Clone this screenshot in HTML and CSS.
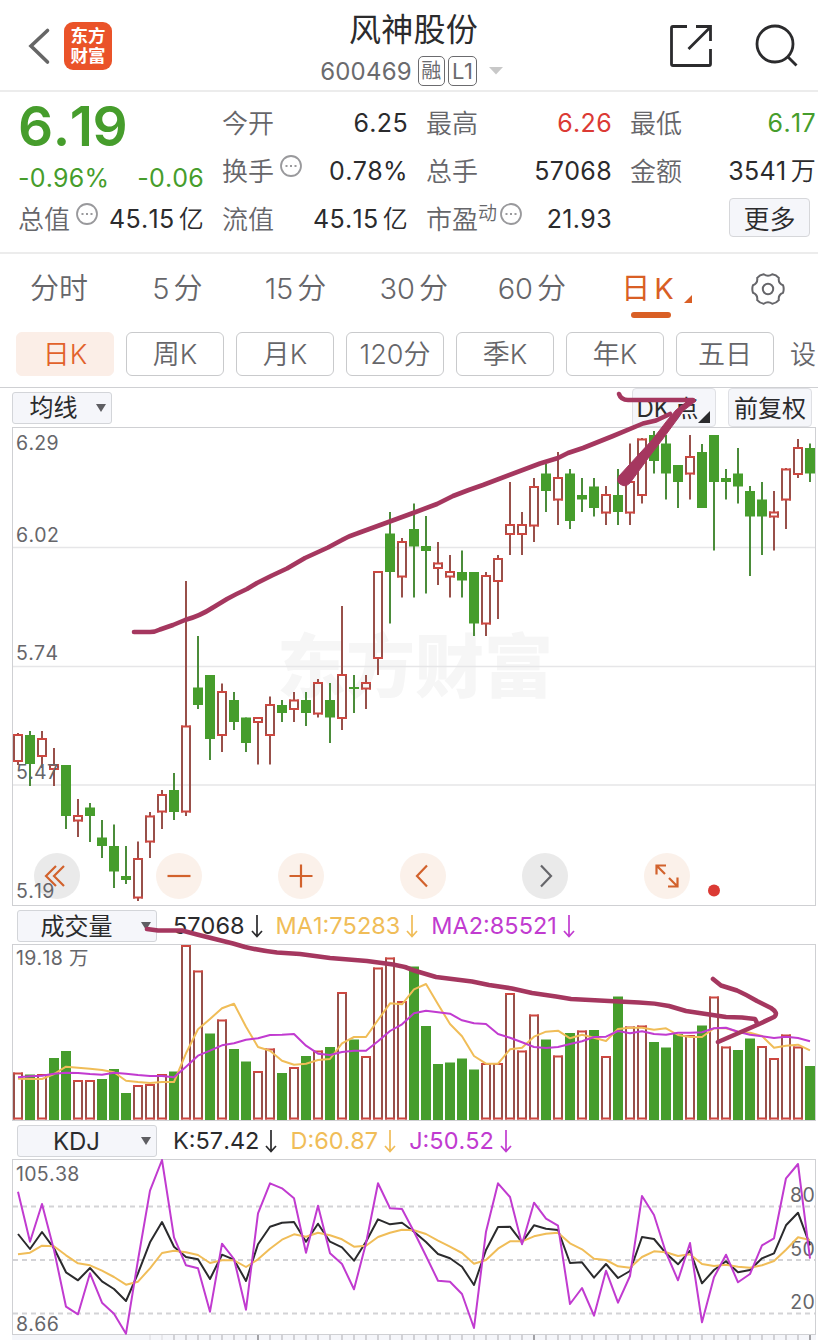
FILE: index.html
```html
<!DOCTYPE html>
<html lang="zh-CN">
<head>
    <meta charset="UTF-8">
    <meta name="viewport" content="width=device-width, initial-scale=1.0">
    <title>风神股份 600469</title>
    <link rel="stylesheet" href="styles.css">
</head>
<body>
    <div class="app">
        <header class="header">
            <div class="header-left">
                <svg class="back" width="24" height="40" viewBox="0 0 24 40"><path d="M20.5 4.5 4 20 20.5 36"/></svg>
                <div class="logo"><span>东方</span><span>财富</span></div>
            </div>
            <div class="header-title">
                <h1>风神股份</h1>
                <div class="code-row">
                    <span class="code">600469</span>
                    <span class="badge">融</span>
                    <span class="badge badge-l1">L1</span>
                    <svg class="caret" width="14" height="8" viewBox="0 0 14 8"><path d="M0 0H14L7 7.500Z"/></svg>
                </div>
            </div>
            <div class="header-right">
                <svg width="44" height="44" viewBox="0 0 44 44"><path d="M18 2.500H4Q2.500 2.500 2.500 4V40Q2.500 41.500 4 41.500H40Q41.500 41.500 41.500 40V25M27 2.500H41.500V17M19.500 25 41 3.500"/></svg>
                <svg width="44" height="44" viewBox="0 0 44 44"><circle cx="20" cy="20" r="18"/><path d="M33 33 41.500 41.500"/></svg>
            </div>
        </header>

        <section class="quote">
            <div class="quote-col quote-main">
                <div class="price">6.19</div>
                <div class="change"><span>-0.96%</span><span>-0.06</span></div>
                <div class="cell">
                    <span class="label">总值</span>
                    <svg class="more-dot" width="22" height="22" viewBox="0 0 22 22"><circle cx="11" cy="11" r="10"/><path d="M5.500 11h2M10 11h2M14.500 11h2"/></svg>
                    <span class="value">45.15<i>亿</i></span>
                </div>
            </div>
            <div class="quote-col">
                <div class="cell"><span class="label">今开</span><span class="value">6.25</span></div>
                <div class="cell">
                    <span class="label">换手</span>
                    <svg class="more-dot" width="22" height="22" viewBox="0 0 22 22"><circle cx="11" cy="11" r="10"/><path d="M5.500 11h2M10 11h2M14.500 11h2"/></svg>
                    <span class="value">0.78%</span>
                </div>
                <div class="cell"><span class="label">流值</span><span class="value">45.15<i>亿</i></span></div>
            </div>
            <div class="quote-col">
                <div class="cell"><span class="label">最高</span><span class="value up">6.26</span></div>
                <div class="cell"><span class="label">总手</span><span class="value">57068</span></div>
                <div class="cell">
                    <span class="label">市盈<sup>动</sup></span>
                    <svg class="more-dot tight" width="22" height="22" viewBox="0 0 22 22"><circle cx="11" cy="11" r="10"/><path d="M5.500 11h2M10 11h2M14.500 11h2"/></svg>
                    <span class="value">21.93</span>
                </div>
            </div>
            <div class="quote-col">
                <div class="cell"><span class="label">最低</span><span class="value down">6.17</span></div>
                <div class="cell"><span class="label">金额</span><span class="value">3541<i>万</i></span></div>
                <div class="cell cell-more"><button class="more-btn">更多</button></div>
            </div>
        </section>

        <nav class="tabs">
            <span class="tab">分时</span>
            <span class="tab">5<i>分</i></span>
            <span class="tab">15<i>分</i></span>
            <span class="tab">30<i>分</i></span>
            <span class="tab">60<i>分</i></span>
            <span class="tab active">日<i>K</i></span>
            <span class="tab">
                <svg class="gear" width="36" height="36" viewBox="-18 -18 36 36"><path d="M15-3.800Q16.400 0 15 3.800Q10 5.800 10.800 11.200Q8.200 14.300 4.300 14.800Q0 11.600-4.300 14.800Q-8.200 14.300-10.800 11.200Q-10 5.800-15 3.800Q-16.400 0-15-3.800Q-10-5.800-10.800-11.200Q-8.200-14.300-4.300-14.800Q0-11.600 4.300-14.800Q8.200-14.300 10.800-11.200Q10-5.800 15-3.800Z"/><circle r="5.200"/></svg>
            </span>
        </nav>

        <div class="periods">
            <span class="period selected">日K</span>
            <span class="period">周K</span>
            <span class="period">月K</span>
            <span class="period">120分</span>
            <span class="period">季K</span>
            <span class="period">年K</span>
            <span class="period">五日</span>
            <span class="period-set">设</span>
        </div>

        <div class="toolbar">
            <div class="select select-ma"><span>均线</span><b class="arrow"></b></div>
            <div class="toolbar-right">
                <div class="tool dk">DK 点</div>
                <div class="tool">前复权</div>
            </div>
        </div>

        <div class="chart-box">
            <div class="watermark">东方财富</div>
            <svg id="kline" class="chart" width="804" height="479" viewBox="12 427 804 479"></svg>
            <div class="controls">
                <span class="ctl off"><svg viewBox="-23 -23 46 46"><path d="M-1-10-11 0-1 10M7-10-3 0 7 10"/></svg></span>
                <span class="ctl"><svg viewBox="-23 -23 46 46"><path d="M-11.500 0h23"/></svg></span>
                <span class="ctl"><svg viewBox="-23 -23 46 46"><path d="M-11.500 0h23M0-11.500v23"/></svg></span>
                <span class="ctl"><svg viewBox="-23 -23 46 46"><path d="M4-10.500-6 0 4 10.500"/></svg></span>
                <span class="ctl off next"><svg viewBox="-23 -23 46 46"><path d="M-4-10.500 6 0-4 10.500"/></svg></span>
                <span class="ctl"><svg viewBox="-23 -23 46 46"><path d="M-10.500-1.500V-10.500H-1M-10-10-2-2M10.500 1.500V10.500H1M10 10 2 2"/></svg></span>
            </div>
            <svg id="klabels" class="chart-labels" width="804" height="479" viewBox="12 427 804 479"></svg>
        </div>

        <div class="indicator">
            <div class="select"><span>成交量</span><b class="arrow"></b></div>
            <span class="ind dark">57068<svg class="fall" viewBox="0 0 12 24"><path d="M6 1V22M1 17 6 22.500 11 17"/></svg></span>
            <span class="ind yellow">MA1:75283<svg class="fall" viewBox="0 0 12 24"><path d="M6 1V22M1 17 6 22.500 11 17"/></svg></span>
            <span class="ind purple">MA2:85521<svg class="fall" viewBox="0 0 12 24"><path d="M6 1V22M1 17 6 22.500 11 17"/></svg></span>
        </div>
        <svg id="volume" class="chart" width="804" height="177" viewBox="12 944 804 177"></svg>

        <div class="indicator">
            <div class="select"><span>KDJ</span><b class="arrow"></b></div>
            <span class="ind dark">K:57.42<svg class="fall" viewBox="0 0 12 24"><path d="M6 1V22M1 17 6 22.500 11 17"/></svg></span>
            <span class="ind yellow">D:60.87<svg class="fall" viewBox="0 0 12 24"><path d="M6 1V22M1 17 6 22.500 11 17"/></svg></span>
            <span class="ind purple">J:50.52<svg class="fall" viewBox="0 0 12 24"><path d="M6 1V22M1 17 6 22.500 11 17"/></svg></span>
        </div>
        <svg id="kdj" class="chart" width="804" height="181" viewBox="12 1159 804 181"></svg>

        <!-- hand drawn trend arrows -->
        <svg class="marks" width="818" height="1340" viewBox="0 0 818 1340">
            <path d="M134 632H150Q155 632 160 629.500L173 625 185 620Q200 616 213 607.500L227 599Q236 594 247 589L257 583 272 575.500 287 568.500 305 558 328 547.500 342 540Q349 536 357 533.500L383 524 413 513 437 504 453 496Q468 490 483 485L540 463.500 558 458 568 453 583 448 613 436 643 423.500 656 420.500 670 414"/>
            <path d="M619 394Q621 400 628 400H693"/>
            <path class="solid" d="M691 399 696 401 683 411 676 421 662 440 652 453 630 483Q625 488 620 484 616 481 619 476L640 453 652 440 667.500 420 676 410Z"/>
            <path d="M147 929 158 930.500H182L197 934.500 233 943.500 245 947Q262 951 277 952.500L300 954 330 958 367 961 393 964.500Q404 966 414 970.500L436 977 472 981.500 489 985 512 988.500 532 993 556 996.500 571 999 609 1001 639 1002.500Q655 1003 669 1006L686 1011 726 1017 742 1017.500 755 1019 757 1023"/>
            <path d="M713 979 721 985.500 737 990.500Q747 995 757 1001L771 1008Q779 1013 774 1017L757 1025 718 1042"/>
        </svg>
    </div>

    <script src="charts.js"></script>
</body>
</html>
```

FILE: styles.css
```css
* {
    margin: 0;
    padding: 0;
    box-sizing: border-box;
}

body {
    background: #fff;
    color: #2b2b2d;
    font-family: Inter, "Noto Sans CJK SC", sans-serif;
    font-kerning: none;
    overflow: hidden;
}

i {
    font-style: normal;
}

svg {
    display: block;
    fill: none;
    flex-shrink: 0;
}

.app {
    position: relative;
    width: 818px;
    height: 1340px;
    overflow: hidden;
}

/* header */
.header {
    height: 92px;
    display: flex;
    justify-content: space-between;
    border-bottom: 2px solid #ececec;
}

.header-left {
    width: 200px;
    display: flex;
    align-items: center;
    padding: 2px 0 0 27px;
    gap: 13px;
}

.back {
    stroke: #666;
    stroke-width: 3.6;
    stroke-linecap: round;
}

.logo {
    width: 48px;
    height: 48px;
    border-radius: 9px;
    background: #ea5329;
    color: #fff;
    font-size: 17.5px;
    font-weight: 700;
    line-height: 20px;
    display: flex;
    flex-direction: column;
    align-items: center;
    justify-content: center;
}

.header-title {
    display: flex;
    flex-direction: column;
    align-items: center;
    padding-left: 9px;
}

.header-title h1 {
    margin-top: 10px;
    font-size: 32px;
    font-weight: 400;
    line-height: 40px;
    letter-spacing: 0.3px;
}

.code-row {
    display: flex;
    align-items: center;
    margin: 6px 4px 0 0;
    height: 30px;
    font-size: 24px;
    color: #6b6b6e;
}

.code {
    letter-spacing: 0.2px;
    margin-right: 6px;
}

.badge {
    width: 27px;
    height: 30px;
    border: 1.5px solid #6b6b6e;
    border-radius: 5px;
    font-size: 20px;
    line-height: 28px;
    text-align: center;
}

.badge-l1 {
    width: 29px;
    margin-left: 3px;
    font-size: 22px;
    letter-spacing: -0.5px;
}

.caret {
    margin-left: 12px;
    fill: #c8c8c8;
}

.header-right {
    width: 200px;
    display: flex;
    justify-content: flex-end;
    align-items: center;
    gap: 42px;
    padding: 2px 19px 0 0;
    stroke: #2b2b2d;
    stroke-width: 2.8;
}

/* quote */
.quote {
    height: 162px;
    display: flex;
    gap: 18px;
    padding: 7px 2px 0 18px;
    border-bottom: 2px solid #ececec;
}

.quote-col {
    width: 186px;
    flex-shrink: 0;
}

.price {
    height: 56px;
    font-size: 55px;
    font-weight: 600;
    line-height: 55px;
    letter-spacing: -0.5px;
    color: #469d2c;
}

.change {
    height: 40px;
    display: flex;
    justify-content: space-between;
    font-size: 25px;
    line-height: 46px;
    letter-spacing: 0.2px;
    color: #469d2c;
}

.cell {
    height: 48px;
    display: flex;
    align-items: center;
    line-height: 49px;
}

.label {
    font-size: 26px;
    font-weight: 350;
    color: #66666a;
}

.label sup {
    font-size: 19px;
    line-height: 1;
    vertical-align: 9px;
}

.more-dot {
    margin: -10px 0 0 6px;
    stroke: #99999c;
    stroke-width: 1.8;
}

.more-dot.tight {
    margin-left: 3px;
}

.value {
    margin-left: auto;
    font-size: 25px;
    letter-spacing: 0.35px;
    white-space: nowrap;
}

.value i {
    margin-left: 4px;
    font-weight: 350;
}

.up {
    color: #db3a34;
}

.down {
    color: #469d2c;
}

.cell-more {
    justify-content: flex-end;
    padding: 0 6px 4px 0;
}

.more-btn {
    width: 81px;
    height: 39px;
    border: 1px solid #d6d7da;
    border-radius: 4px;
    background: #f5f6fa;
    color: #2b2b2d;
    font: 350 26px/35px "Noto Sans CJK SC", sans-serif;
}

/* tabs */
.tabs {
    height: 78px;
    display: flex;
}

.tab {
    position: relative;
    width: 118.2px;
    flex-shrink: 0;
    height: 69px;
    display: flex;
    justify-content: center;
    align-items: center;
    font-size: 29px;
    font-weight: 350;
    line-height: 69px;
    color: #66666a;
}

.tab i {
    margin-left: 4px;
}

.tab.active {
    padding-right: 5px;
    color: #d95f25;
    font-weight: 400;
}

.tab.active::before {
    content: "";
    position: absolute;
    left: 40px;
    bottom: 5px;
    width: 40px;
    height: 6px;
    border-radius: 3px;
    background: #d95f25;
}

.tab.active::after {
    content: "";
    position: absolute;
    right: 17px;
    top: 41px;
    border-left: 8px solid transparent;
    border-bottom: 8px solid #d95f25;
}

.gear {
    stroke: #66666a;
    stroke-width: 2;
}

/* periods */
.periods {
    height: 55px;
    display: flex;
    gap: 12px;
    padding-left: 16px;
}

.period {
    width: 98px;
    height: 44px;
    flex-shrink: 0;
    border: 1px solid #c9cacc;
    border-radius: 6px;
    font-size: 27px;
    font-weight: 350;
    line-height: 43px;
    text-align: center;
    color: #66666a;
}

.period.selected {
    border-color: #fbeee7;
    background: #fbeee7;
    color: #e2622b;
}

.period-set {
    flex-shrink: 0;
    margin-left: 4px;
    font-size: 26px;
    font-weight: 350;
    line-height: 45px;
    color: #66666a;
}

/* toolbar */
.toolbar {
    height: 40px;
    display: flex;
    justify-content: space-between;
    align-items: center;
    padding: 0 6px 0 12px;
    border-top: 1px solid #cfd0d3;
}

.select {
    width: 140px;
    height: 32px;
    display: flex;
    align-items: center;
    border: 1px solid #d3d5d9;
    border-radius: 3px;
    background: #f5f6fa;
    font-size: 24px;
    line-height: 33px;
}

.select span {
    flex: 1;
    text-align: center;
}

.arrow {
    margin-right: 5px;
    border: 5px solid transparent;
    border-top: 8px solid #5e5e62;
    border-bottom: 0;
}

.select-ma {
    width: 100px;
}

.select-ma span {
    padding-right: 2px;
}

.toolbar-right {
    display: flex;
    gap: 12px;
}

.tool {
    position: relative;
    width: 84px;
    height: 39px;
    border: 1px solid #dfe0e4;
    border-radius: 4px;
    background: #f5f6fa;
    font-size: 24px;
    line-height: 40px;
    text-align: center;
    white-space: nowrap;
}

.dk {
    padding-right: 13px;
    word-spacing: -2px;
}

.dk::after {
    content: "";
    position: absolute;
    right: 5px;
    bottom: 3px;
    border-left: 12px solid transparent;
    border-bottom: 12px solid #2b2b2d;
}

/* charts */
.chart {
    position: relative;
    margin-left: 12px;
}

.chart-box {
    position: relative;
    height: 479px;
}

.watermark {
    position: absolute;
    left: 277px;
    top: 190px;
    font-size: 69px;
    font-weight: 900;
    line-height: 100px;
    color: #f6f6f6;
}

.chart-labels {
    position: absolute;
    left: 12px;
    top: 0;
}

.controls {
    position: absolute;
    left: 34px;
    bottom: 7px;
    display: flex;
    gap: 76px;
}

.ctl {
    width: 46px;
    height: 46px;
    border-radius: 50%;
    background: #fbf1ea;
    stroke: #d2622c;
    stroke-width: 2.2;
}

.ctl.off {
    background: #eaeaea;
}

.ctl.next {
    stroke: #66666a;
}

.indicator {
    height: 38px;
    display: flex;
    align-items: center;
    padding: 2px 0 0 17px;
}

.indicator .select {
    margin-right: 16px;
}

.indicator .select span {
    padding-right: 6px;
}

.ind {
    display: flex;
    align-items: center;
    gap: 6px;
    margin-right: 13px;
    font-size: 23.5px;
    line-height: 30px;
}

.fall {
    width: 12px;
    height: 24px;
    stroke: currentColor;
    stroke-width: 1.7;
}

.dark {
    color: #2b2b2d;
}

.yellow {
    color: #f0bd58;
}

.purple {
    color: #c13bd0;
}

.frame {
    stroke: #cfd0d3;
}

.grid {
    stroke: #e6e6e8;
    stroke-width: 1.4;
}

.dash {
    stroke: #d3d3d6;
    stroke-width: 2;
    stroke-dasharray: 5 4;
}

.axis {
    fill: #66666a;
    font-size: 19.5px;
    letter-spacing: 0.3px;
}

.red-h {
    stroke: #cd4740;
    stroke-width: 2;
}

.red-v {
    stroke: #98504a;
    stroke-width: 2;
}

.green-v {
    stroke: #4b8c3a;
    stroke-width: 2;
}

.green-body {
    fill: #469d2c;
}

.line {
    stroke-width: 2;
    stroke-linejoin: round;
}

.line-k {
    stroke: #2b2b2d;
}

.line-d {
    stroke: #f0bd58;
}

.line-j {
    stroke: #c13bd0;
}

.marks {
    position: absolute;
    left: 0;
    top: 0;
    stroke: #a5375f;
    stroke-width: 4.6;
    stroke-linecap: round;
    stroke-linejoin: round;
    pointer-events: none;
}

.marks .solid {
    fill: #a5375f;
    stroke-width: 1;
}
```

FILE: charts.js
```js
const STEP = 12;
const X0 = 18;

// kind, high, body top, body bottom, low
const candles = [
    ['r', 733, 734, 762, 765], ['g', 731, 735, 764, 786], ['r', 731, 738, 757, 768], ['r', 748, 764, 770, 786],
    ['g', 765, 765, 816, 829], ['r', 799, 815, 821.5, 837], ['g', 803, 807.5, 816, 842], ['g', 820, 837.5, 846, 858],
    ['g', 824.5, 846, 871.5, 888], ['g', 846, 876, 880, 884], ['r', 841.5, 858, 898.5, 901], ['r', 812, 815.5, 842.5, 858],
    ['r', 790, 794, 812.5, 829], ['g', 773, 790, 812, 820], ['r', 581, 725.5, 812.5, 816], ['g', 636, 687.5, 705, 709],
    ['g', 675, 675, 739, 760], ['r', 683.5, 691, 736, 752], ['g', 692, 700, 722, 730], ['g', 717.5, 717.5, 743, 752],
    ['r', 717, 717, 723, 764.5], ['r', 696.5, 704, 736, 764.5], ['g', 700, 705, 713, 722], ['r', 692, 699.5, 710, 722],
    ['g', 692, 700, 713, 726], ['r', 679, 682, 714.5, 717.5], ['g', 683, 700, 717.5, 743], ['r', 606, 674, 719, 730],
    ['g', 675, 687, 689, 713], ['r', 675, 682, 689.5, 709], ['r', 571, 571, 659, 675], ['g', 512, 533.5, 572, 623.5],
    ['r', 538, 541, 577.5, 597.5], ['g', 503.5, 529, 546.5, 597.5], ['g', 516, 546, 551, 593.5], ['r', 542, 562.5, 569, 585],
    ['r', 555, 571, 577.5, 597.5], ['g', 550.5, 572, 580.5, 597.5], ['g', 572, 572, 623.5, 636], ['r', 572, 575, 624.5, 636],
    ['r', 555, 558, 582, 619], ['r', 482, 524, 535, 555], ['r', 512, 524, 535, 555], ['r', 478, 486, 526.5, 542],
    ['g', 464, 473.5, 491, 512], ['r', 452, 477, 500.5, 525], ['g', 469, 473.5, 521, 529], ['g', 478, 495, 499.5, 512],
    ['g', 478, 486.5, 508, 516.5], ['r', 486, 494, 513.5, 525], ['g', 469, 495, 512, 525], ['r', 443.5, 481, 513.5, 525],
    ['r', 438, 438.5, 496, 503.5], ['g', 431, 435, 461, 473.5], ['g', 435, 443.5, 473.5, 499.5], ['g', 465, 465, 482, 508],
    ['r', 435, 456, 474.5, 499.5], ['g', 444, 452, 508, 508], ['g', 435, 435, 482, 550.5], ['g', 469, 478, 482, 499.5],
    ['g', 448, 473.5, 486.5, 503.5], ['g', 486, 491, 516.5, 576], ['g', 482, 499.5, 516.5, 555], ['r', 491, 511.5, 517.5, 550.5],
    ['r', 468, 468.5, 500.5, 529], ['r', 439, 447, 475, 478], ['g', 443.5, 448, 473.5, 482]
];

const volumeKinds = 'rgrggrrggg' + 'rrrgrrgrgg' + 'rrgrgrgrgr' + 'rrrgggggg' + 'rrrrrgrgrgrgrrgggrgrrggrrrrg';
const volumeTops = [
    1072.5, 1074.5, 1074, 1058, 1051, 1080, 1080, 1079, 1069, 1093, 1085, 1084, 1074, 1071.5, 945, 970.5, 1033.5,
    1019.5, 1049, 1061.5, 1071, 1048.5, 1073, 1067, 1056, 1050.5, 1047, 992, 1039.5, 1056, 967.5, 957.5, 1001, 966.5,
    1026, 1064, 1062.5, 1058.5, 1069.5, 1063, 1063, 993, 1050.5, 1014.5, 1039.5, 1055.5, 1033, 1030.5, 1030, 1056,
    996.5, 1026.5, 1025.5, 1042, 1047.5, 1034, 1035, 1025.5, 996.5, 1046.5, 1050, 1038.5, 1046, 1058, 1034.5, 1046.5, 1066
];

// line series are kept in thirds of a pixel
const ma1 = [536, 537, 537, 522, 500, 503, 506, 510, 517, 542, 546, 549, 546, 546, 460, 388, 357, 325, 311, 380, 441, 452,
    482, 494, 491, 480, 477, 430, 411, 411, 360, 310, 313, 268, 252, 313, 372, 409, 468, 491, 491, 448, 443, 410, 395, 392,
    415, 404, 413, 423, 387, 383, 383, 389, 385, 405, 411, 411, 385, 385, 395, 398, 408, 443, 437, 434, 451];
const ma2 = [532, 529, 527, 521, 518, 519, 522, 524, 518, 521, 525, 528, 528, 532, 500, 467, 452, 436, 430, 419, 415, 405,
    404, 402, 437, 461, 465, 456, 452, 452, 424, 393, 373, 340, 332, 337, 341, 361, 370, 372, 402, 413, 427, 441, 444, 441,
    432, 424, 411, 410, 393, 400, 394, 402, 404, 398, 398, 397, 385, 383, 395, 404, 409, 414, 410, 414, 424];
const k = [252, 297, 246, 295, 367, 391, 354, 394, 417, 453, 370, 277, 216, 290, 321, 328, 387, 314, 329, 393, 283, 230,
    218, 216, 275, 221, 275, 292, 332, 275, 208, 223, 218, 245, 276, 312, 325, 350, 405, 300, 231, 230, 277, 226, 236, 240,
    339, 337, 383, 342, 384, 363, 261, 267, 310, 343, 302, 400, 360, 334, 367, 360, 325, 310, 226, 188, 286];
const d = [313, 308, 287, 289, 316, 340, 346, 362, 381, 404, 395, 355, 309, 302, 307, 315, 339, 331, 331, 351, 328, 296,
    269, 253, 260, 248, 256, 268, 290, 287, 261, 248, 239, 241, 252, 272, 290, 309, 341, 330, 296, 274, 274, 259, 251, 248,
    280, 298, 326, 330, 349, 353, 321, 304, 307, 318, 313, 342, 348, 344, 350, 353, 346, 333, 299, 262, 270];
const j = [125, 275, 162, 300, 470, 493, 370, 458, 491, 551, 330, 122, 30, 262, 346, 355, 485, 281, 327, 479, 190, 100,
    115, 145, 308, 167, 310, 342, 418, 280, 100, 175, 177, 245, 318, 392, 395, 432, 534, 245, 100, 141, 283, 158, 206, 227,
    462, 414, 497, 362, 458, 378, 138, 195, 308, 391, 279, 517, 382, 314, 397, 372, 286, 265, 85, 42, 326];

const x = i => X0 + i * STEP;

function path(cls, dd) {
    return `<path class="${cls}" d="${dd}"/>`;
}

function text(px, py, str, anchor = 'start') {
    return `<text class="axis" x="${px}" y="${py}" text-anchor="${anchor}">${str}</text>`;
}

function frame(top, bottom) {
    return `<rect class="frame" x="12.5" y="${top}" width="803" height="${bottom - top}"/>`;
}

function line(cls, series, base) {
    const points = series.map((v, i) => `${x(i)},${(base + v / 3).toFixed(1)}`).join(' ');
    return `<polyline class="line ${cls}" points="${points}"/>`;
}

// hollow red body
function redBox(cx, top, bottom) {
    return path('red-v', `M${cx - 4} ${top}V${bottom}M${cx + 4} ${top}V${bottom}`) +
        path('red-h', `M${cx - 5} ${top + 1}H${cx + 5}M${cx - 5} ${bottom - 1}H${cx + 5}`);
}

function greenBox(cx, top, bottom) {
    return `<rect class="green-body" x="${cx - 5}" y="${top}" width="10" height="${bottom - top}"/>`;
}

function drawKline() {
    let out = frame(427.5, 905.5) + path('grid', 'M13 547.5H815M13 666.5H815M13 785H815');
    candles.forEach(([kind, high, top, bottom, low], i) => {
        const cx = x(i);
        if (kind === 'r') {
            out += path('red-v', `M${cx} ${high}V${top + 1}M${cx} ${bottom - 1}V${low}`) + redBox(cx, top, bottom);
        } else {
            out += path('green-v', `M${cx} ${high}V${low}`) + greenBox(cx, top, bottom);
        }
    });
    document.getElementById('kline').innerHTML = out;
    document.getElementById('klabels').innerHTML =
        text(16, 450, '6.29') + text(16, 541.5, '6.02') + text(16, 660, '5.74') +
        text(16, 779, '5.47') + text(16, 898, '5.19') +
        '<circle cx="714" cy="890.5" r="6" fill="#db3a34"/>';
}

function drawVolume() {
    let out = frame(944.5, 1120.5) + text(16, 965, '19.18 万');
    volumeTops.forEach((top, i) => {
        out += volumeKinds[i] === 'r' ? redBox(x(i), top, 1119.5) : greenBox(x(i), top, 1120);
    });
    out += line('line-d', ma1, 900) + line('line-j', ma2, 900);
    document.getElementById('volume').innerHTML = out;
}

function drawKdj() {
    let out = '<rect x="12" y="1335" width="804" height="5" fill="#f5f6fa"/>' + frame(1159.5, 1334.5);
    out += path('dash', 'M13 1206.500H815M13 1260H815M13 1313.500H815');
    out += text(16, 1180.5, '105.38') + text(16, 1331, '8.66');
    out += text(815, 1202, '80', 'end') + text(815, 1256, '50', 'end') + text(815, 1309, '20', 'end');
    out += line('line-k', k, 1150) + line('line-d', d, 1150) + line('line-j', j, 1150);
    for (let i = 11; i < 67; i++) {
        const strong = i === 20 || i === 43 || i === 66;
        const color = strong ? '#8e8e92' : i < 13 ? '#e4e4e8' : '#c9c9cd';
        out += `<path d="M${x(i)} 1335V1340" stroke="${color}" stroke-width="1.6"/>`;
    }
    document.getElementById('kdj').innerHTML = out;
}

drawKline();
drawVolume();
drawKdj();
```
